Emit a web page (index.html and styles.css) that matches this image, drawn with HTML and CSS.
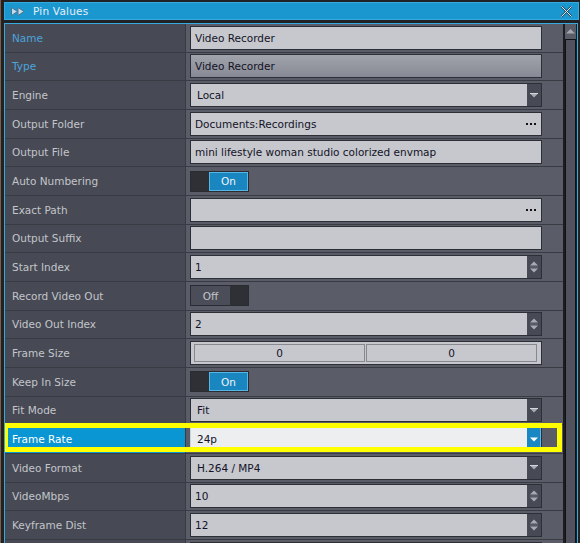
FILE: index.html
```html
<!DOCTYPE html>
<html lang="en">

<head>
    <meta charset="UTF-8">
    <title>Pin Values</title>
    <link rel="stylesheet" href="styles.css">
</head>

<body>
    <div class="window">
        <div class="titlebar">
            <svg class="title-icon" width="14" height="9" viewBox="0 0 14 9">
                <path d="M0.5 0.5 L6.5 4.5 L0.5 8.5Z M7 0.5 L13 4.5 L7 8.5Z" fill="#c2daea" stroke="#4a7590" stroke-width="1"/>
            </svg>
            <span class="title-text">Pin Values</span>
            <svg class="close" width="11" height="11" viewBox="0 0 11 11">
                <path d="M0.5 0.5 L10.5 10.5 M10.5 0.5 L0.5 10.5" stroke="#274f66" stroke-width="2.2"/>
                <path d="M0.5 0.5 L10.5 10.5 M10.5 0.5 L0.5 10.5" stroke="#dbe6ee" stroke-width="1"/>
            </svg>
        </div>

        <div class="panel">
            <div class="rows">
                <div class="row">
                    <div class="label label-blue">Name</div>
                    <div class="value"><div class="field"><span class="text">Video Recorder</span></div></div>
                </div>
                <div class="row">
                    <div class="label label-blue">Type</div>
                    <div class="value"><div class="field field-locked"><span class="text">Video Recorder</span></div></div>
                </div>
                <div class="row">
                    <div class="label">Engine</div>
                    <div class="value">
                        <div class="field select"><span class="text">Local</span>
                            <span class="btn"><svg width="8" height="5" viewBox="0 0 8 5"><path d="M0 0.5 H8 L4 4.5Z" fill="#a9abb3"/><path d="M0 0.5 H8" stroke="#d4d6dc" stroke-width="1"/></svg></span>
                        </div>
                    </div>
                </div>
                <div class="row">
                    <div class="label">Output Folder</div>
                    <div class="value">
                        <div class="field"><span class="text">Documents:Recordings</span>
                            <svg class="dots" width="10" height="2" viewBox="0 0 10 2"><rect x="0" width="2" height="2"/><rect x="4" width="2" height="2"/><rect x="8" width="2" height="2"/></svg>
                        </div>
                    </div>
                </div>
                <div class="row">
                    <div class="label">Output File</div>
                    <div class="value"><div class="field"><span class="text">mini lifestyle woman studio colorized envmap</span></div></div>
                </div>
                <div class="row">
                    <div class="label">Auto Numbering</div>
                    <div class="value">
                        <div class="toggle"><span class="knob"></span><span class="on">On</span></div>
                    </div>
                </div>
                <div class="row">
                    <div class="label">Exact Path</div>
                    <div class="value">
                        <div class="field"><span class="text"></span>
                            <svg class="dots" width="10" height="2" viewBox="0 0 10 2"><rect x="0" width="2" height="2"/><rect x="4" width="2" height="2"/><rect x="8" width="2" height="2"/></svg>
                        </div>
                    </div>
                </div>
                <div class="row">
                    <div class="label">Output Suffix</div>
                    <div class="value"><div class="field"><span class="text"></span></div></div>
                </div>
                <div class="row">
                    <div class="label">Start Index</div>
                    <div class="value">
                        <div class="field select"><span class="text num">1</span>
                            <span class="btn"><svg width="8" height="12" viewBox="0 0 8 12"><path d="M0 4.5 L4 0.5 L8 4.5Z M0 7.5 H8 L4 11.5Z" fill="#a9abb3"/><path d="M0 6 H8" stroke="#6a6d76" stroke-width="1"/></svg></span>
                        </div>
                    </div>
                </div>
                <div class="row">
                    <div class="label">Record Video Out</div>
                    <div class="value">
                        <div class="toggle"><span class="off">Off</span><span class="knob"></span></div>
                    </div>
                </div>
                <div class="row">
                    <div class="label">Video Out Index</div>
                    <div class="value">
                        <div class="field select"><span class="text num">2</span>
                            <span class="btn"><svg width="8" height="12" viewBox="0 0 8 12"><path d="M0 4.5 L4 0.5 L8 4.5Z M0 7.5 H8 L4 11.5Z" fill="#a9abb3"/><path d="M0 6 H8" stroke="#6a6d76" stroke-width="1"/></svg></span>
                        </div>
                    </div>
                </div>
                <div class="row">
                    <div class="label">Frame Size</div>
                    <div class="value">
                        <div class="pair"><span class="cell">0</span><span class="cell">0</span></div>
                    </div>
                </div>
                <div class="row">
                    <div class="label">Keep In Size</div>
                    <div class="value">
                        <div class="toggle"><span class="knob"></span><span class="on">On</span></div>
                    </div>
                </div>
                <div class="row">
                    <div class="label">Fit Mode</div>
                    <div class="value">
                        <div class="field select"><span class="text">Fit</span>
                            <span class="btn"><svg width="8" height="5" viewBox="0 0 8 5"><path d="M0 0.5 H8 L4 4.5Z" fill="#a9abb3"/><path d="M0 0.5 H8" stroke="#d4d6dc" stroke-width="1"/></svg></span>
                        </div>
                    </div>
                </div>
                <div class="row row-selected">
                    <div class="label">Frame Rate</div>
                    <div class="value">
                        <div class="field select"><span class="text">24p</span>
                            <span class="btn"><svg width="8" height="5" viewBox="0 0 8 5"><path d="M0 0.5 H8 L4 4.5Z" fill="#ffffff"/></svg></span>
                        </div>
                    </div>
                    <div class="highlight"></div>
                </div>
                <div class="row">
                    <div class="label">Video Format</div>
                    <div class="value">
                        <div class="field select"><span class="text">H.264 / MP4</span>
                            <span class="btn"><svg width="8" height="5" viewBox="0 0 8 5"><path d="M0 0.5 H8 L4 4.5Z" fill="#a9abb3"/><path d="M0 0.5 H8" stroke="#d4d6dc" stroke-width="1"/></svg></span>
                        </div>
                    </div>
                </div>
                <div class="row">
                    <div class="label">VideoMbps</div>
                    <div class="value">
                        <div class="field select"><span class="text num">10</span>
                            <span class="btn"><svg width="8" height="12" viewBox="0 0 8 12"><path d="M0 4.5 L4 0.5 L8 4.5Z M0 7.5 H8 L4 11.5Z" fill="#a9abb3"/><path d="M0 6 H8" stroke="#6a6d76" stroke-width="1"/></svg></span>
                        </div>
                    </div>
                </div>
                <div class="row">
                    <div class="label">Keyframe Dist</div>
                    <div class="value">
                        <div class="field select"><span class="text num">12</span>
                            <span class="btn"><svg width="8" height="12" viewBox="0 0 8 12"><path d="M0 4.5 L4 0.5 L8 4.5Z M0 7.5 H8 L4 11.5Z" fill="#a9abb3"/><path d="M0 6 H8" stroke="#6a6d76" stroke-width="1"/></svg></span>
                        </div>
                    </div>
                </div>
                <div class="row">
                    <div class="label"></div>
                    <div class="value">
                        <div class="field select"><span class="text"></span>
                            <span class="btn"></span>
                        </div>
                    </div>
                </div>
            </div>

            <div class="scrollbar">
                <div class="scroll-up">
                    <svg width="9" height="5" viewBox="0 0 9 5"><path d="M0 4.5 L4.5 0 L9 4.5Z" fill="#a4a6ae"/></svg>
                </div>
                <div class="thumb"></div>
            </div>
        </div>
    </div>
</body>
</html>
```

FILE: styles.css
```css
* {
    box-sizing: border-box;
}

body {
    margin: 0;
    height: 543px;
    overflow: hidden;
    background-color: #212226;
    box-shadow: inset 1px 0 #7a5e48;
    font-family: "DejaVu Sans", sans-serif;
    font-size: 10.5px;
}

.window {
    margin-left: 4px;
    width: 575px;
    padding-top: 2px;
}

.titlebar {
    display: flex;
    align-items: center;
    height: 18px;
    padding-left: 6px;
    background: #1b97d0;
    border: 1px solid #35aadf;
    color: #e6eef5;
}

.title-icon {
    margin-right: 8px;
}

.title-text {
    flex-grow: 1;
    font-size: 10.5px;
    letter-spacing: 0.2px;
}

.close {
    margin-right: 6px;
}

.panel {
    display: flex;
    width: 574px;
    height: 530px;
    margin-top: 3px;
    border: 1px solid #38a8dd;
    border-bottom: none;
    overflow: hidden;
}

.rows {
    width: 558px;
}

.row {
    position: relative;
    display: flex;
    height: 28.67px;
    border-bottom: 1px solid #393b43;
}

.label {
    display: flex;
    align-items: center;
    width: 181px;
    padding-left: 7px;
    background: #474a54;
    border-right: 1px solid #393b43;
    color: #c3c5cb;
}

.label-blue {
    color: #4ba4dd;
}

.value {
    display: flex;
    align-items: center;
    flex-grow: 1;
    padding-left: 4px;
    background: #5a5d68;
}

.field {
    display: flex;
    align-items: center;
    width: 352px;
    height: 24px;
    padding-left: 4px;
    background: #c6c8cd;
    border: 1px solid #2d2f37;
    color: #131327;
}

.field .text {
    flex-grow: 1;
    white-space: nowrap;
    overflow: hidden;
}

.field-locked {
    background: linear-gradient(#a1a3ac, #878a94);
}

.dots {
    margin-right: 5px;
    fill: #111;
}

.select {
    padding-left: 6px;
}

.select .num {
    margin-left: -2px;
}

.select .btn {
    display: flex;
    align-items: center;
    justify-content: center;
    width: 14px;
    height: 100%;
    background: #474a54;
}

.toggle {
    display: flex;
    width: 59px;
    height: 21px;
    border: 1px solid #2a2c32;
}

.toggle .knob {
    width: 18px;
    background: #2f3036;
}

.toggle .on {
    display: flex;
    align-items: center;
    justify-content: center;
    flex-grow: 1;
    background: #1a86bf;
    border: 1px solid #54b7e6;
    color: #eef4f8;
}

.toggle .off {
    display: flex;
    align-items: center;
    justify-content: center;
    width: 39px;
    background: #4b4e58;
    color: #c3c5cb;
}

.pair {
    display: flex;
    gap: 1px;
    width: 352px;
    height: 24px;
    padding: 2px 4px 2px 3px;
    background: #c6c8cd;
    border: 1px solid #2d2f37;
}

.pair .cell {
    display: flex;
    align-items: center;
    justify-content: center;
    flex-grow: 1;
    border: 1px solid #878990;
    color: #131327;
}

.row-selected .label {
    background: #0a95d3;
    color: #ffffff;
}

.row-selected .field {
    background: #eceef0;
    border-left-color: #c9d6e0;
}

.row-selected .btn {
    background: #1887c3;
    border-right: 1px solid #5cb9e6;
}

.highlight {
    position: absolute;
    top: -2px;
    left: -2px;
    width: 559px;
    height: 28.5px;
    border: 5px solid #ffff00;
}

.scrollbar {
    display: flex;
    flex-direction: column;
    width: 14px;
    padding: 0 1px 0 2px;
    background: #1c1d21;
}

.scroll-up {
    display: flex;
    align-items: center;
    justify-content: center;
    height: 15px;
    background: #5a5d68;
}

.thumb {
    flex-grow: 1;
    background: #50535d;
    border: 1px solid #111215;
}
```
